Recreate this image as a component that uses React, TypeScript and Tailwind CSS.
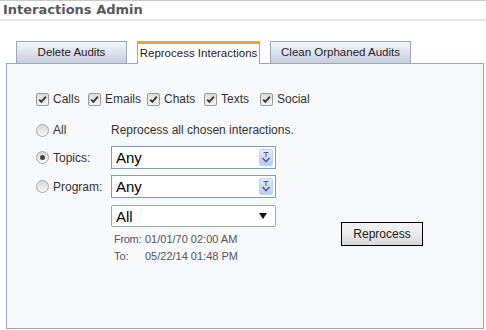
import React from "react";

const font = { fontFamily: '"Liberation Sans", Arial, sans-serif' };

function Check({ label }: { label: string }) {
  return (
    <div className="flex items-center">
      <div className="w-[13px] h-[13px] border border-[#9a9a9a] rounded-[2px] bg-gradient-to-b from-[#dcdcdc] to-[#f4f4f4] flex items-center justify-center">
        <svg width="9" height="9" viewBox="0 0 9 9">
          <path d="M1.2 4.6 L3.4 6.9 L7.8 1.6" fill="none" stroke="#333" strokeWidth="1.8" />
        </svg>
      </div>
      <span className="ml-[4px] text-[12px] text-[#333]">{label}</span>
    </div>
  );
}

function Radio({ on }: { on?: boolean }) {
  return (
    <div className="w-[13px] h-[13px] rounded-full border border-[#a8a8a8] bg-gradient-to-b from-[#d8d8d8] to-[#f6f6f6] flex items-center justify-center">
      {on && <div className="w-[5px] h-[5px] rounded-full bg-[#444]" />}
    </div>
  );
}

function BlueSelect({ value }: { value: string }) {
  return (
    <div className="w-[165px] h-[23px] border border-[#7f9db9] bg-white flex items-center justify-between pl-[4px] pr-[2px]">
      <span className="text-[15px] text-black leading-none">{value}</span>
      <div className="w-[14px] h-[17px] rounded-[2px] bg-gradient-to-b from-[#e3ebfb] to-[#b9cbf2] border border-[#c3d1f0] flex items-center justify-center">
        <svg width="10" height="13" viewBox="0 0 10 13">
          <path d="M2.5 1.5 H7.5 M5 1.5 V6" stroke="#4d6185" strokeWidth="1" fill="none" />
          <path d="M1.5 7 L5 10.5 L8.5 7" stroke="#4d6185" strokeWidth="1.6" fill="none" />
        </svg>
      </div>
    </div>
  );
}

export default function App() {
  return (
    <div className="w-[486px] h-[330px] bg-white border-t border-[#c8c8c8] overflow-hidden" style={font}>
      {/* header */}
      <div className="h-[20px] pl-[3px] flex items-center border-b-2 border-[#e8e8e8]">
        <span className="font-bold text-[#585858]" style={{ fontFamily: '"DejaVu Sans", Verdana, sans-serif', fontSize: 13 }}>
          Interactions Admin
        </span>
      </div>

      {/* tabs */}
      <div className="mt-[19px] pl-[16px] flex items-end gap-[10px] h-[23px]">
        <div className="w-[111px] h-[22px] border border-b-0 border-[#9aa8b4] bg-gradient-to-b from-[#f4f5f9] to-[#c8cede] flex items-center justify-center text-[11.5px] text-[#222]">
          Delete Audits
        </div>
        <div className="relative z-10 w-[123px] h-[23px] border-x border-[#9aa8b4] border-t-[3px] border-t-[#f5a033] bg-white flex items-center justify-center text-[11.5px] text-[#222] -mb-px">
          Reprocess Interactions
        </div>
        <div className="w-[141px] h-[22px] border border-b-0 border-[#9aa8b4] bg-gradient-to-b from-[#f4f5f9] to-[#c8cede] flex items-center justify-center text-[11.5px] text-[#222]">
          Clean Orphaned Audits
        </div>
      </div>

      {/* panel */}
      <div className="ml-[6px] w-[478px] h-[266px] border border-[#9aa8b4] bg-[#f7f8fa] pl-[29px] pt-[28px]">
        <div className="flex items-center h-[14px]">
          <div className="w-[52px]"><Check label="Calls" /></div>
          <div className="w-[59px]"><Check label="Emails" /></div>
          <div className="w-[57px]"><Check label="Chats" /></div>
          <div className="w-[56px]"><Check label="Texts" /></div>
          <Check label="Social" />
        </div>

        <div className="flex items-center mt-[16px] h-[16px]">
          <div className="w-[75px] flex items-center">
            <Radio />
            <span className="ml-[4px] text-[12px] text-[#333]">All</span>
          </div>
          <span className="text-[12px] text-[#333]">Reprocess all chosen interactions.</span>
        </div>

        <div className="flex items-center mt-[8px]">
          <div className="w-[75px] flex items-center">
            <Radio on />
            <span className="ml-[4px] text-[12px] text-[#333]">Topics:</span>
          </div>
          <BlueSelect value="Any" />
        </div>

        <div className="flex items-center mt-[6px]">
          <div className="w-[75px] flex items-center">
            <Radio />
            <span className="ml-[4px] text-[12px] text-[#333]">Program:</span>
          </div>
          <BlueSelect value="Any" />
        </div>

        <div className="flex mt-[7px]">
          <div className="w-[75px]" />
          <div className="w-[165px]">
            <div className="h-[22px] border border-[#a5a5a5] rounded-[2px] bg-white flex items-center justify-between pl-[4px] pr-[8px]">
              <span className="text-[15px] text-black leading-none">All</span>
              <svg width="8" height="6" viewBox="0 0 8 6">
                <path d="M0 0 H8 L4 6 Z" fill="#111" />
              </svg>
            </div>
            <div className="mt-[4px] pl-[3px] text-[11px] text-[#555] leading-[17px]">
              <div className="flex"><span className="w-[31px] tracking-[-0.3px]">From:</span><span>01/01/70 02:00 AM</span></div>
              <div className="flex"><span className="w-[31px]">To:</span><span>05/22/14 01:48 PM</span></div>
            </div>
          </div>
          <div className="ml-[65px] mt-[17px]">
            <div className="w-[82px] h-[24px] border border-black bg-gradient-to-b from-[#f2f2f2] via-[#ebebeb] to-[#d6d6d6] flex items-center justify-center text-[12px] text-[#1a1a1a]">
              Reprocess
            </div>
          </div>
        </div>
      </div>
    </div>
  );
}
